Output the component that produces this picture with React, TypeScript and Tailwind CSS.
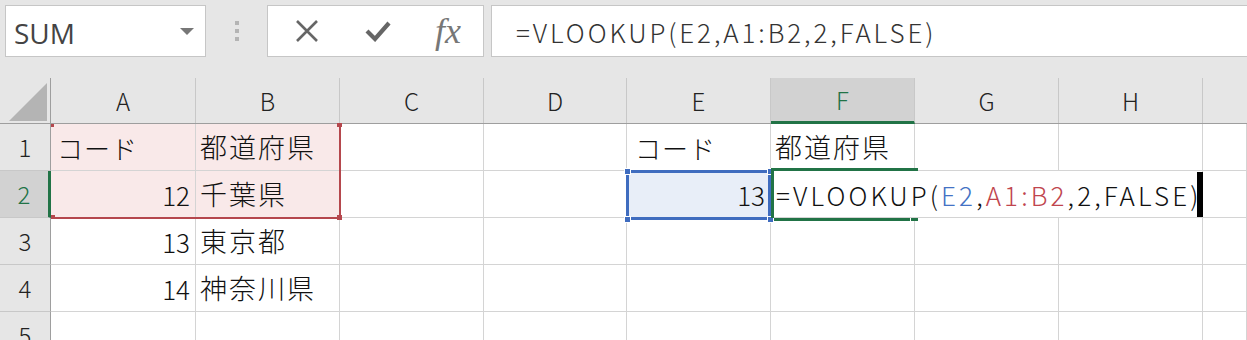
import React from 'react';

const gridCols = 'grid grid-cols-[51px_145px_144px_144px_143px_144px_144px_144px_144px_44px]';
const letters = ['A', 'B', 'C', 'D', 'E', 'F', 'G', 'H'];

type CellProps = {
  children?: React.ReactNode;
  right?: boolean;
  className?: string;
};

// plain grid cell; CJK text gets a little extra tracking to match Yu Gothic widths
const Cell: React.FC<CellProps> = ({ children, right, className = '' }) => (
  <div
    className={`h-[47px] border-r border-b border-[#d4d4d4] flex items-center overflow-hidden whitespace-nowrap text-[26px] font-light text-[#111] ${
      right ? 'justify-end pr-[5px]' : 'pl-[4px]'
    } ${className}`}
  >
    {children}
  </div>
);

const Kanji: React.FC<{ children: React.ReactNode }> = ({ children }) => (
  <span className="text-[27px] tracking-[2px]">{children}</span>
);

const Kana: React.FC<{ children: React.ReactNode }> = ({ children }) => (
  <span className="text-[26px] tracking-[1px]">{children}</span>
);

const RowHead: React.FC<{ n: number; active?: boolean }> = ({ n, active }) => (
  <div
    className={`h-[47px] border-b border-[#c8c8c8] flex items-center justify-center text-[24px] font-light ${
      active
        ? 'bg-[#d2d2d2] text-[#217346] border-r-[3px] border-r-[#217346]'
        : 'bg-[#e6e6e6] text-[#222] border-r border-r-[#9e9e9e]'
    }`}
  >
    {n}
  </div>
);

const Toolbar: React.FC = () => (
  <div className="h-[78px] bg-[#e6e6e6] flex items-start pt-[5px] pl-[5px]">
    <div className="w-[201px] h-[52px] bg-white border border-[#c6c6c6] flex items-center justify-between pl-[8px] pr-[11px]">
      <span className="font-['Open_Sans','Liberation_Sans',sans-serif] text-[28px] text-[#444] pt-[3px]">SUM</span>
      <svg width="14" height="7" viewBox="0 0 14 7">
        <polygon points="0,0 14,0 7,7" fill="#777" />
      </svg>
    </div>
    <div className="w-[61px] h-[52px] flex flex-col items-center justify-center gap-[4px]">
      <div className="w-[4px] h-[4px] bg-[#b4b4b4]" />
      <div className="w-[4px] h-[4px] bg-[#b4b4b4]" />
      <div className="w-[4px] h-[4px] bg-[#b4b4b4]" />
    </div>
    <div className="w-[217px] h-[52px] bg-white border border-[#c6c6c6] flex items-center">
      <div className="w-[75px] flex justify-center pl-[2px]">
        <svg width="24" height="22" viewBox="0 0 24 22">
          <path d="M2 1 L22 21 M22 1 L2 21" stroke="#666" strokeWidth="2.6" />
        </svg>
      </div>
      <div className="w-[70px] flex justify-center">
        <svg width="26" height="22" viewBox="0 0 26 22">
          <path d="M2 11 L10 19 L24 3" stroke="#666" strokeWidth="4.2" fill="none" strokeLinejoin="miter" />
        </svg>
      </div>
      <div className="w-[70px] flex justify-center">
        <span className="font-['Liberation_Serif',serif] italic text-[36px] text-[#777] leading-none">fx</span>
      </div>
    </div>
    <div className="ml-[7px] flex-1 h-[52px] bg-white border border-[#c6c6c6] border-r-0 flex items-center pl-[24px]">
      <span className="text-[26px] font-light tracking-[2.9px] text-[#333] whitespace-nowrap">=VLOOKUP(E2,A1:B2,2,FALSE)</span>
    </div>
  </div>
);

const HeaderRow: React.FC = () => (
  <div className={`${gridCols} h-[46px] bg-[#e6e6e6] border-b border-[#9e9e9e]`}>
    <div className="pt-[4px] border-r border-[#9e9e9e]">
      <svg width="50" height="41" viewBox="0 0 50 41">
        <polygon points="9,39 47,1 47,39" fill="#b4b4b4" />
      </svg>
    </div>
    {letters.map((l) =>
      l === 'F' ? (
        <div
          key={l}
          className="flex items-center justify-center bg-[#d2d2d2] text-[#217346] text-[24px] font-light border-r border-[#c8c8c8] border-b-[3px] border-b-[#217346] -mb-px"
        >
          {l}
        </div>
      ) : (
        <div key={l} className="flex items-center justify-center text-[24px] font-light text-[#222] border-r border-[#c8c8c8]">
          {l}
        </div>
      )
    )}
    <div />
  </div>
);

export default function App() {
  const pink = 'bg-[#f9e9e9]';
  return (
    <div className="relative w-[1247px] h-[340px] overflow-hidden bg-white font-['Noto_Sans_CJK_JP','Noto_Sans',sans-serif]">
      <Toolbar />
      <HeaderRow />

      {/* row 1 */}
      <div className={gridCols}>
        <RowHead n={1} />
        <Cell className={`${pink} pl-[6px]`}><Kana>コード</Kana></Cell>
        <Cell className={pink}><Kanji>都道府県</Kanji></Cell>
        <Cell />
        <Cell />
        <Cell className="pl-[8px]"><Kana>コード</Kana></Cell>
        <Cell><Kanji>都道府県</Kanji></Cell>
        <Cell />
        <Cell />
        <Cell />
      </div>

      {/* row 2 */}
      <div className={gridCols}>
        <RowHead n={2} active />
        <Cell right className={pink}>12</Cell>
        <Cell className={pink}><Kanji>千葉県</Kanji></Cell>
        <Cell />
        <Cell />
        <Cell right className="bg-[#e8eef8]">13</Cell>
        <div className="col-span-3 h-[47px] border-r border-b border-[#d4d4d4] flex items-center pl-[5px] whitespace-nowrap text-[26px] font-light tracking-[3.1px] text-[#111]">
          <span>=VLOOKUP(</span>
          <span className="text-[#4472c4]">E2</span>
          <span>,</span>
          <span className="text-[#c0454e]">A1:B2</span>
          <span>,2,FALSE)</span>
        </div>
        <Cell />
      </div>

      {/* rows 3-5 */}
      {[
        { n: 3, a: '13', b: '東京都' },
        { n: 4, a: '14', b: '神奈川県' },
        { n: 5, a: '', b: '' },
      ].map((r) => (
        <div key={r.n} className={gridCols}>
          <RowHead n={r.n} />
          <Cell right>{r.a}</Cell>
          <Cell>{r.b && <Kanji>{r.b}</Kanji>}</Cell>
          <Cell />
          <Cell />
          <Cell />
          <Cell />
          <Cell />
          <Cell />
          <Cell />
        </div>
      ))}

      {/* range A1:B2 highlight */}
      <div className="absolute left-[51px] top-[124px] w-[290px] h-[95px] border-r-2 border-b-2 border-[#b5474d] pointer-events-none" />
      <div className="absolute left-[51px] top-[124px] w-[3px] h-[3px] bg-[#b5474d]" />
      <div className="absolute left-[337px] top-[123px] w-[5px] h-[4px] bg-[#b5474d]" />
      <div className="absolute left-[51px] top-[215px] w-[4px] h-[4px] bg-[#b5474d]" />
      <div className="absolute left-[337px] top-[215px] w-[5px] h-[5px] bg-[#b5474d]" />

      {/* E2 reference */}
      <div className="absolute left-[626px] top-[170px] w-[145px] h-[50px] border-[3px] border-[#3f6cbf]" />
      {[
        'left-[624px] top-[168px]',
        'left-[767px] top-[168px]',
        'left-[624px] top-[216px]',
        'left-[767px] top-[216px]',
      ].map((p) => (
        <div key={p} className={`absolute ${p} w-[7px] h-[7px] bg-[#3f6cbf] border border-white`} />
      ))}

      {/* F2 editing */}
      <div className="absolute left-[771px] top-[168px] w-[147px] h-[3px] bg-[#217346]" />
      <div className="absolute left-[771px] top-[171px] w-[3px] h-[47px] bg-[#217346]" />
      <div className="absolute left-[774px] top-[218px] w-[136px] h-[3px] bg-[#217346]" />
      <div className="absolute left-[911px] top-[218px] w-[7px] h-[3px] bg-[#217346]" />

      {/* caret */}
      <div className="absolute left-[1197px] top-[172px] w-[6px] h-[45px] bg-black" />
    </div>
  );
}
